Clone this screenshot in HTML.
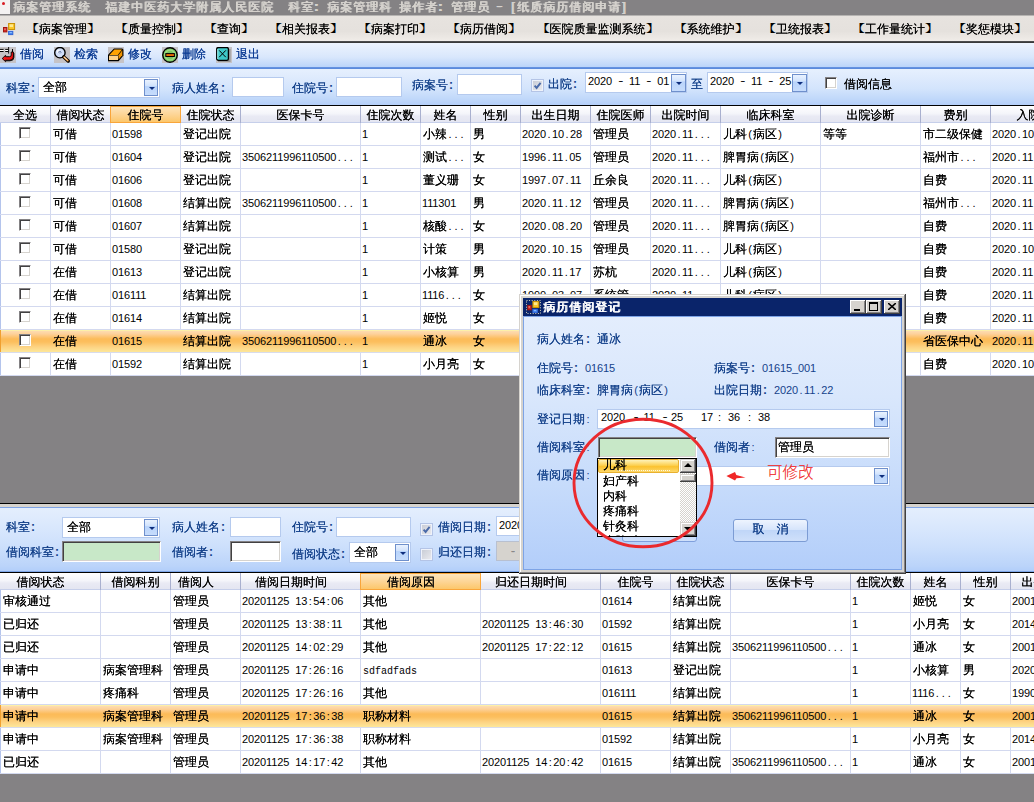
<!DOCTYPE html><html lang="zh"><head><meta charset="utf-8"><title>病案管理系统</title><style>
*{box-sizing:border-box;margin:0;padding:0}
html,body{width:1034px;height:802px;overflow:hidden}
body{position:relative;background:#848284;font:12px/12px "Liberation Sans","WenQuanYi Zen Hei","Noto Sans CJK SC",sans-serif;color:#000;text-shadow:0 0 0}
.n{font-size:11px;text-shadow:none;letter-spacing:-.12px}
.p{display:inline-block;width:6px;text-align:center;font-size:11px;text-shadow:none}
.h{transform:translateY(-1px) scaleX(1.4)}
.co{font-size:12px;font-weight:bold}
.m{font:10px/12px 'Liberation Mono',monospace;text-shadow:none}
.dp .p{width:5.7px}
.a{position:absolute;white-space:nowrap}
.t{position:absolute;white-space:nowrap;height:12px;line-height:12px}
.bl{color:#15428b}
#title{left:0;top:0;width:1034px;height:15px;background:#848284}
#title .t{color:#d6d3ce;letter-spacing:1px;top:1px;text-shadow:1px 0 0,0 0 0}
#menu{left:0;top:15px;width:1034px;height:28px;background:linear-gradient(#b6b4b2 0,#b6b4b2 1px,#e7e3df 1px,#e5e1dd 60%,#eeeae6 90%,#f4f0ec);border-bottom:1px solid #3a3a3a}
#menu:after{content:"";position:absolute;left:0;right:0;bottom:0;height:1px;background:#4c4c4c}
#menu .t{top:7px}
.bk{display:inline-block;width:12px;font-family:'Noto Serif CJK SC',serif;text-shadow:none}
.bl_{transform:scale(1.25,.86);transform-origin:11px 55%}
.br_{transform:scale(1.25,.86);transform-origin:1px 55%}
#tool{left:0;top:43px;width:1034px;height:26px;background:linear-gradient(#eef4fe 0,#e4eefd 6px,#d9e7fc 14px,#c4dafa 21px,#bad4fa 24px,#6a96e2 24px,#5686da 26px)}
#tool .t{top:5px;color:#0c3c94}
.ib{position:absolute;top:4px;width:16px;height:16px;background:#c6c3c6}
#filt{left:0;top:69px;width:1034px;height:37px;background:linear-gradient(#e6f0fe 0,#dfebfd 8px,#d3e4fc 20px,#c0d8fa 30px,#b4cffa 36px);border-bottom:1px solid #000}
.inp{position:absolute;background:#fff;border:1px solid #b5caee}
.sunk{position:absolute;background:#fff;border:1px solid;border-color:#848284 #fff #fff #848284;box-shadow:inset 1px 1px 0 #424142, inset -1px -1px 0 #d6d3ce}
.ddb{position:absolute;width:14px;background:linear-gradient(#e9f2ff,#d2e3fc 38%,#b9d4fb 42%,#c6dcfc);border:1px solid #6f90cc}
.ddb:after{content:"";position:absolute;left:3.5px;top:50%;margin-top:-1px;border:3px solid transparent;border-top:3px solid #0e2e7e;border-bottom:none;width:0;height:0}
.hd{position:absolute;height:17px;box-shadow:inset 0 -1px 0 #c6cfea;background:linear-gradient(#fefeff,#f4f5fa 45%,#e9eaf4 60%,#e3e5f1);overflow:hidden}
.hc{position:absolute;top:0;height:17px;border-right:1px solid #a9b0cf;text-align:center;line-height:12px;padding-top:3px;overflow:hidden;white-space:nowrap}
.hc.sel{background:linear-gradient(#fde6c0,#fdd596 50%,#fcc565);box-shadow:inset 0 0 0 1px #f9a53a;border-right:none}
.row{position:absolute;left:0;width:1034px;height:23px;background:#fff;border-bottom:1px solid #d3d9ef;overflow:hidden}
.row.sel{background:linear-gradient(#fdf0a8 0,#fdf0a8 1px,#fddcb0 1px,#fdd19a 4px,#fcbb58 9px,#fcbf5e 12px,#fdd383 17px,#fde79a 22px);border-bottom-color:#d8dcec}
.c{position:absolute;top:0;height:23px;border-right:1px solid #d3d9ef;padding:5px 0 0 2px;line-height:12px;overflow:hidden;white-space:nowrap}
.row.sel .c{border-right-color:transparent}
.c>.n:first-child{margin-left:-1px}
.cb{position:absolute;width:12px;height:12px;background:#fff;border:1px solid;border-color:#848284 #fff #fff #848284;box-shadow:inset 1px 1px 0 #424142, inset -1px -1px 0 #d6d3ce}
</style></head><body>
<div class="a" id="title">
<div class="a" style="left:0;top:0;width:10px;height:14px;background:#f4f2f2"></div><div class="a" style="left:2px;top:2px;width:3px;height:3px;background:#d81c24;border-radius:2px"></div>
<div class="t" style="left:13px">病案管理系统</div>
<div class="t" style="left:105px">福建中医药大学附属人民医院</div>
<div class="t" style="left:288px">科室<b>:</b></div>
<div class="t" style="left:327px">病案管理科</div>
<div class="t" style="left:399px">操作者<b>:</b></div>
<div class="t" style="left:451px">管理员</div>
<div class="t" style="left:497px"><span class="h" style="display:inline-block">-</span></div>
<div class="t" style="left:511px">[</div>
<div class="t" style="left:517px">纸质病历借阅申请</div>
<div class="t" style="left:622px">]</div>
</div>
<div class="a" id="menu">
<svg class="a" style="left:2px;top:7px" width="14" height="14" viewBox="0 0 14 14"><rect x="1.5" y="5.5" width="3.4" height="4.4" fill="#d82820" stroke="#a01410" stroke-width="1"/><rect x="2.4" y="6.4" width="1.2" height="1.6" fill="#f09088"/><rect x="6.6" y="1.5" width="6" height="6" fill="#fbc62a" stroke="#c89208" stroke-width="1"/><rect x="7.6" y="2.4" width="3.4" height="2.6" fill="#fdea90"/><rect x="6.6" y="9.4" width="4.2" height="3.2" fill="#4a8af0" stroke="#3468d8" stroke-width="1"/><rect x="7.6" y="10" width="2.2" height="1" fill="#90c0ff"/></svg>
<div class="t" style="left:27px"><span class="bk bl_">【</span>病案管理<span class="bk br_">】</span></div>
<div class="t" style="left:116px"><span class="bk bl_">【</span>质量控制<span class="bk br_">】</span></div>
<div class="t" style="left:205px"><span class="bk bl_">【</span>查询<span class="bk br_">】</span></div>
<div class="t" style="left:270px"><span class="bk bl_">【</span>相关报表<span class="bk br_">】</span></div>
<div class="t" style="left:359px"><span class="bk bl_">【</span>病案打印<span class="bk br_">】</span></div>
<div class="t" style="left:448px"><span class="bk bl_">【</span>病历借阅<span class="bk br_">】</span></div>
<div class="t" style="left:537.5px"><span class="bk bl_">【</span>医院质量监测系统<span class="bk br_">】</span></div>
<div class="t" style="left:674.5px"><span class="bk bl_">【</span>系统维护<span class="bk br_">】</span></div>
<div class="t" style="left:764px"><span class="bk bl_">【</span>卫统报表<span class="bk br_">】</span></div>
<div class="t" style="left:853px"><span class="bk bl_">【</span>工作量统计<span class="bk br_">】</span></div>
<div class="t" style="left:954px"><span class="bk bl_">【</span>奖惩模块<span class="bk br_">】</span></div>
</div>
<div class="a" id="tool">
<div class="ib" style="left:0px"><svg width="16" height="16" viewBox="0 0 16 16"><rect x="0" y="1.9" width="8.4" height="3.1" fill="#000"/><rect x="0" y="2.9" width="8.2" height="1.1" fill="#fff"/><rect x="3.6" y="1.9" width="1.6" height="3.1" fill="#c6c3c6"/><rect x="8.2" y="0" width=".9" height="6.6" fill="#000"/><rect x="12" y="2" width="1" height="3" fill="#000"/><path d="M11.2 5 L13.4 5 L13.4 10 Q13.4 13.2 10 13.2 L5.6 13.2 L5.6 14.7 L2.2 11.5 L5.6 8.3 L5.6 9.7 L9.6 9.7 Q11.2 9.7 11.2 8 Z" fill="#f01414" stroke="#000" stroke-width=".9" stroke-linejoin="round"/><path d="M13.9 6 L13.9 10.4 Q13.8 13.8 10 13.8 L6 13.8" stroke="#000" stroke-width=".9" fill="none"/></svg></div>
<div class="t" style="left:20px">借阅</div>
<div class="ib" style="left:54px"><svg width="16" height="16" viewBox="0 0 16 16"><circle cx="5.9" cy="5.7" r="5.2" fill="#d2dff8" stroke="#000" stroke-width="1.4"/><circle cx="4.6" cy="4.4" r="1.8" fill="#fff" opacity=".8"/><path d="M4 5.5 L6 4 L7.5 5.5 M6 4.5 V6.5" stroke="#7888b0" fill="none"/><path d="M9.8 9.9 L14.2 14" stroke="#000" stroke-width="3.4" stroke-linecap="round"/><path d="M10 10.2 L13.8 13.7" stroke="#f8a040" stroke-width="1.6" stroke-linecap="round"/><path d="M10 9.8 L13.4 13" stroke="#fff" stroke-width=".8"/></svg></div>
<div class="t" style="left:74px">检索</div>
<div class="ib" style="left:108px"><svg width="16" height="16" viewBox="0 0 16 16"><path d="M6 1.5 L14.3 1.5 L15.4 2.8 L15.4 8.6 L10.6 14.2 L0 14.2 L0 7.8Z" fill="#000"/><path d="M6.4 2.6 L14 2.6 L9.8 7.9 L1.4 7.9Z" fill="#ffa200"/><path d="M14.3 3.2 L14.3 8.2 L10.6 12.6 L10.4 8.3Z" fill="#ee9200"/><rect x="1" y="8.6" width="9" height="4.4" fill="#ffd288"/></svg></div>
<div class="t" style="left:128px">修改</div>
<div class="ib" style="left:162px"><svg width="16" height="16" viewBox="0 0 16 16"><circle cx="8" cy="8" r="7.25" fill="#7cc864" stroke="#000" stroke-width="1.4"/><circle cx="8" cy="8" r="5" fill="none" stroke="#9cdc84" stroke-width="1.6"/><rect x="3.8" y="6.6" width="8.6" height="2.9" fill="#e86a04" stroke="#000" stroke-width="1"/></svg></div>
<div class="t" style="left:182px">删除</div>
<div class="ib" style="left:216px"><svg width="16" height="16" viewBox="0 0 16 16"><rect x="2" y="2" width="12.6" height="13" fill="#9a9a9a"/><rect x="0.7" y="0.5" width="11.7" height="12.8" rx="1.6" fill="#3ec8c8" stroke="#000" stroke-width="1.3"/><path d="M1.8 2 V12" stroke="#a8f0f0" stroke-width="1"/><path d="M3.2 3.4 L9.8 10.2 M9.8 3.4 L3.2 10.2" stroke="#000" stroke-width="1"/></svg></div>
<div class="t" style="left:236px">退出</div>
</div>
<div class="a" id="filt">
<div class="t bl" style="left:6px;top:13px">科室<span class="p co">:</span></div>
<div class="inp" style="left:38px;top:8px;width:122px;height:21px"><div class="t" style="left:4px;top:3px;color:#000">全部</div><div class="ddb" style="right:1px;top:1px;height:17px"></div></div>
<div class="t bl" style="left:172px;top:13px">病人姓名<span class="p co">:</span></div>
<div class="inp" style="left:232px;top:8px;width:52px;height:20px"></div>
<div class="t bl" style="left:292px;top:13px">住院号<span class="p co">:</span></div>
<div class="inp" style="left:336px;top:8px;width:66px;height:20px"></div>
<div class="t bl" style="left:412px;top:10px">病案号<span class="p co">:</span></div>
<div class="inp" style="left:457px;top:5px;width:65px;height:21px"></div>
<div class="a" style="left:531px;top:10px;width:13px;height:13px;background:linear-gradient(135deg,#c6cad4,#ececf0);border:1px solid #b4c4e6;box-shadow:inset 0 0 0 1px #eef2fa"><svg class="a" style="left:1px;top:1px" width="9" height="9" viewBox="0 0 9 9"><path d="M1.6 4.6 L3.6 6.9 L7.6 1.8" stroke="#4a6aa8" stroke-width="1.9" fill="none"/></svg></div>
<div class="t bl" style="left:548px;top:9px">出院<span class="p co">:</span></div>
<div class="inp" style="left:585px;top:3px;width:102px;height:21px"><div class="t dp" style="left:2px;top:2px"><span class="n">2020</span><span class="p">&nbsp;</span><span class="p h">-</span><span class="p">&nbsp;</span><span class="n">11</span><span class="p">&nbsp;</span><span class="p h">-</span><span class="p">&nbsp;</span><span class="n">01</span></div><div class="ddb" style="right:0px;top:1px;width:15px;height:18px"></div></div>
<div class="t bl" style="left:691px;top:9px">至</div>
<div class="inp" style="left:707px;top:3px;width:101px;height:21px"><div class="t dp" style="left:2px;top:2px"><span class="n">2020</span><span class="p">&nbsp;</span><span class="p h">-</span><span class="p">&nbsp;</span><span class="n">11</span><span class="p">&nbsp;</span><span class="p h">-</span><span class="p">&nbsp;</span><span class="n">25</span></div><div class="ddb" style="right:0px;top:1px;width:15px;height:18px"></div></div>
<div class="cb" style="left:825px;top:8px"></div>
<div class="t " style="left:844px;top:9px">借阅信息</div>
</div>
<div class="hd" style="left:0;top:106px;width:1034px">
<div class="hc" style="left:0px;width:51px">全选</div>
<div class="hc" style="left:51px;width:60px">借阅状态</div>
<div class="hc sel" style="left:110px;width:71px">住院号</div>
<div class="hc" style="left:181px;width:60px">住院状态</div>
<div class="hc" style="left:241px;width:120px">医保卡号</div>
<div class="hc" style="left:361px;width:60px">住院次数</div>
<div class="hc" style="left:421px;width:50px">姓名</div>
<div class="hc" style="left:471px;width:50px">性别</div>
<div class="hc" style="left:521px;width:70px">出生日期</div>
<div class="hc" style="left:591px;width:60px">住院医师</div>
<div class="hc" style="left:651px;width:70px">出院时间</div>
<div class="hc" style="left:721px;width:100px">临床科室</div>
<div class="hc" style="left:821px;width:100px">出院诊断</div>
<div class="hc" style="left:921px;width:70px">费别</div>
<div class="hc" style="left:991px;width:100px">入院日期</div>
</div>
<div class="row" style="top:123px">
<div class="c" style="left:0;width:51px;border-left:1px solid #b4c4ec"><div class="cb" style="left:18px;top:4px"></div></div>
<div class="c" style="left:51px;width:60px">可借</div>
<div class="c" style="left:111px;width:70px"><span class="n">01598</span></div>
<div class="c" style="left:181px;width:60px">登记出院</div>
<div class="c" style="left:241px;width:120px"></div>
<div class="c" style="left:361px;width:60px"><span class="n">1</span></div>
<div class="c" style="left:421px;width:50px">小辣<span class="p">.</span><span class="p">.</span><span class="p">.</span></div>
<div class="c" style="left:471px;width:50px">男</div>
<div class="c" style="left:521px;width:70px"><span class="n">2020</span><span class="p">.</span><span class="n">10</span><span class="p">.</span><span class="n">28</span></div>
<div class="c" style="left:591px;width:60px">管理员</div>
<div class="c" style="left:651px;width:70px"><span class="n">2020</span><span class="p">.</span><span class="n">11</span><span class="p">.</span><span class="p">.</span><span class="p">.</span></div>
<div class="c" style="left:721px;width:100px">儿科<span class="p">(</span>病区<span class="p">)</span></div>
<div class="c" style="left:821px;width:100px">等等</div>
<div class="c" style="left:921px;width:70px">市二级保健</div>
<div class="c" style="left:991px;width:100px"><span class="n">2020</span><span class="p">.</span><span class="n">10</span><span class="p">.</span><span class="n">30</span></div>
</div>
<div class="row" style="top:146px">
<div class="c" style="left:0;width:51px;border-left:1px solid #b4c4ec"><div class="cb" style="left:18px;top:4px"></div></div>
<div class="c" style="left:51px;width:60px">可借</div>
<div class="c" style="left:111px;width:70px"><span class="n">01604</span></div>
<div class="c" style="left:181px;width:60px">登记出院</div>
<div class="c" style="left:241px;width:120px"><span class="n">3506211996110500</span><span class="p">.</span><span class="p">.</span><span class="p">.</span></div>
<div class="c" style="left:361px;width:60px"><span class="n">1</span></div>
<div class="c" style="left:421px;width:50px">测试<span class="p">.</span><span class="p">.</span><span class="p">.</span></div>
<div class="c" style="left:471px;width:50px">女</div>
<div class="c" style="left:521px;width:70px"><span class="n">1996</span><span class="p">.</span><span class="n">11</span><span class="p">.</span><span class="n">05</span></div>
<div class="c" style="left:591px;width:60px">管理员</div>
<div class="c" style="left:651px;width:70px"><span class="n">2020</span><span class="p">.</span><span class="n">11</span><span class="p">.</span><span class="p">.</span><span class="p">.</span></div>
<div class="c" style="left:721px;width:100px">脾胃病<span class="p">(</span>病区<span class="p">)</span></div>
<div class="c" style="left:821px;width:100px"></div>
<div class="c" style="left:921px;width:70px">福州市<span class="p">.</span><span class="p">.</span><span class="p">.</span></div>
<div class="c" style="left:991px;width:100px"><span class="n">2020</span><span class="p">.</span><span class="n">11</span><span class="p">.</span><span class="n">02</span></div>
</div>
<div class="row" style="top:169px">
<div class="c" style="left:0;width:51px;border-left:1px solid #b4c4ec"><div class="cb" style="left:18px;top:4px"></div></div>
<div class="c" style="left:51px;width:60px">可借</div>
<div class="c" style="left:111px;width:70px"><span class="n">01606</span></div>
<div class="c" style="left:181px;width:60px">登记出院</div>
<div class="c" style="left:241px;width:120px"></div>
<div class="c" style="left:361px;width:60px"><span class="n">1</span></div>
<div class="c" style="left:421px;width:50px">董义珊</div>
<div class="c" style="left:471px;width:50px">女</div>
<div class="c" style="left:521px;width:70px"><span class="n">1997</span><span class="p">.</span><span class="n">07</span><span class="p">.</span><span class="n">11</span></div>
<div class="c" style="left:591px;width:60px">丘余良</div>
<div class="c" style="left:651px;width:70px"><span class="n">2020</span><span class="p">.</span><span class="n">11</span><span class="p">.</span><span class="p">.</span><span class="p">.</span></div>
<div class="c" style="left:721px;width:100px">儿科<span class="p">(</span>病区<span class="p">)</span></div>
<div class="c" style="left:821px;width:100px"></div>
<div class="c" style="left:921px;width:70px">自费</div>
<div class="c" style="left:991px;width:100px"><span class="n">2020</span><span class="p">.</span><span class="n">11</span><span class="p">.</span><span class="n">03</span></div>
</div>
<div class="row" style="top:192px">
<div class="c" style="left:0;width:51px;border-left:1px solid #b4c4ec"><div class="cb" style="left:18px;top:4px"></div></div>
<div class="c" style="left:51px;width:60px">可借</div>
<div class="c" style="left:111px;width:70px"><span class="n">01608</span></div>
<div class="c" style="left:181px;width:60px">结算出院</div>
<div class="c" style="left:241px;width:120px"><span class="n">3506211996110500</span><span class="p">.</span><span class="p">.</span><span class="p">.</span></div>
<div class="c" style="left:361px;width:60px"><span class="n">1</span></div>
<div class="c" style="left:421px;width:50px"><span class="n">111301</span></div>
<div class="c" style="left:471px;width:50px">男</div>
<div class="c" style="left:521px;width:70px"><span class="n">2020</span><span class="p">.</span><span class="n">11</span><span class="p">.</span><span class="n">12</span></div>
<div class="c" style="left:591px;width:60px">管理员</div>
<div class="c" style="left:651px;width:70px"><span class="n">2020</span><span class="p">.</span><span class="n">11</span><span class="p">.</span><span class="p">.</span><span class="p">.</span></div>
<div class="c" style="left:721px;width:100px">脾胃病<span class="p">(</span>病区<span class="p">)</span></div>
<div class="c" style="left:821px;width:100px"></div>
<div class="c" style="left:921px;width:70px">福州市<span class="p">.</span><span class="p">.</span><span class="p">.</span></div>
<div class="c" style="left:991px;width:100px"><span class="n">2020</span><span class="p">.</span><span class="n">11</span><span class="p">.</span><span class="n">12</span></div>
</div>
<div class="row" style="top:215px">
<div class="c" style="left:0;width:51px;border-left:1px solid #b4c4ec"><div class="cb" style="left:18px;top:4px"></div></div>
<div class="c" style="left:51px;width:60px">可借</div>
<div class="c" style="left:111px;width:70px"><span class="n">01607</span></div>
<div class="c" style="left:181px;width:60px">结算出院</div>
<div class="c" style="left:241px;width:120px"></div>
<div class="c" style="left:361px;width:60px"><span class="n">1</span></div>
<div class="c" style="left:421px;width:50px">核酸<span class="p">.</span><span class="p">.</span><span class="p">.</span></div>
<div class="c" style="left:471px;width:50px">女</div>
<div class="c" style="left:521px;width:70px"><span class="n">2020</span><span class="p">.</span><span class="n">08</span><span class="p">.</span><span class="n">20</span></div>
<div class="c" style="left:591px;width:60px">管理员</div>
<div class="c" style="left:651px;width:70px"><span class="n">2020</span><span class="p">.</span><span class="n">11</span><span class="p">.</span><span class="p">.</span><span class="p">.</span></div>
<div class="c" style="left:721px;width:100px">脾胃病<span class="p">(</span>病区<span class="p">)</span></div>
<div class="c" style="left:821px;width:100px"></div>
<div class="c" style="left:921px;width:70px">自费</div>
<div class="c" style="left:991px;width:100px"><span class="n">2020</span><span class="p">.</span><span class="n">11</span><span class="p">.</span><span class="n">04</span></div>
</div>
<div class="row" style="top:238px">
<div class="c" style="left:0;width:51px;border-left:1px solid #b4c4ec"><div class="cb" style="left:18px;top:4px"></div></div>
<div class="c" style="left:51px;width:60px">可借</div>
<div class="c" style="left:111px;width:70px"><span class="n">01580</span></div>
<div class="c" style="left:181px;width:60px">登记出院</div>
<div class="c" style="left:241px;width:120px"></div>
<div class="c" style="left:361px;width:60px"><span class="n">1</span></div>
<div class="c" style="left:421px;width:50px">计策</div>
<div class="c" style="left:471px;width:50px">男</div>
<div class="c" style="left:521px;width:70px"><span class="n">2020</span><span class="p">.</span><span class="n">10</span><span class="p">.</span><span class="n">15</span></div>
<div class="c" style="left:591px;width:60px">管理员</div>
<div class="c" style="left:651px;width:70px"><span class="n">2020</span><span class="p">.</span><span class="n">11</span><span class="p">.</span><span class="p">.</span><span class="p">.</span></div>
<div class="c" style="left:721px;width:100px">儿科<span class="p">(</span>病区<span class="p">)</span></div>
<div class="c" style="left:821px;width:100px"></div>
<div class="c" style="left:921px;width:70px">自费</div>
<div class="c" style="left:991px;width:100px"><span class="n">2020</span><span class="p">.</span><span class="n">10</span><span class="p">.</span><span class="n">28</span></div>
</div>
<div class="row" style="top:261px">
<div class="c" style="left:0;width:51px;border-left:1px solid #b4c4ec"><div class="cb" style="left:18px;top:4px"></div></div>
<div class="c" style="left:51px;width:60px">在借</div>
<div class="c" style="left:111px;width:70px"><span class="n">01613</span></div>
<div class="c" style="left:181px;width:60px">登记出院</div>
<div class="c" style="left:241px;width:120px"></div>
<div class="c" style="left:361px;width:60px"><span class="n">1</span></div>
<div class="c" style="left:421px;width:50px">小核算</div>
<div class="c" style="left:471px;width:50px">男</div>
<div class="c" style="left:521px;width:70px"><span class="n">2020</span><span class="p">.</span><span class="n">11</span><span class="p">.</span><span class="n">17</span></div>
<div class="c" style="left:591px;width:60px">苏杭</div>
<div class="c" style="left:651px;width:70px"><span class="n">2020</span><span class="p">.</span><span class="n">11</span><span class="p">.</span><span class="p">.</span><span class="p">.</span></div>
<div class="c" style="left:721px;width:100px">儿科<span class="p">(</span>病区<span class="p">)</span></div>
<div class="c" style="left:821px;width:100px"></div>
<div class="c" style="left:921px;width:70px">自费</div>
<div class="c" style="left:991px;width:100px"><span class="n">2020</span><span class="p">.</span><span class="n">11</span><span class="p">.</span><span class="n">17</span></div>
</div>
<div class="row" style="top:284px">
<div class="c" style="left:0;width:51px;border-left:1px solid #b4c4ec"><div class="cb" style="left:18px;top:4px"></div></div>
<div class="c" style="left:51px;width:60px">在借</div>
<div class="c" style="left:111px;width:70px"><span class="n">016111</span></div>
<div class="c" style="left:181px;width:60px">结算出院</div>
<div class="c" style="left:241px;width:120px"></div>
<div class="c" style="left:361px;width:60px"><span class="n">1</span></div>
<div class="c" style="left:421px;width:50px"><span class="n">1116</span><span class="p">.</span><span class="p">.</span><span class="p">.</span></div>
<div class="c" style="left:471px;width:50px">女</div>
<div class="c" style="left:521px;width:70px"><span class="n">1990</span><span class="p">.</span><span class="n">03</span><span class="p">.</span><span class="n">07</span></div>
<div class="c" style="left:591px;width:60px">系统管<span class="p">.</span><span class="p">.</span><span class="p">.</span></div>
<div class="c" style="left:651px;width:70px"><span class="n">2020</span><span class="p">.</span><span class="n">11</span><span class="p">.</span><span class="p">.</span><span class="p">.</span></div>
<div class="c" style="left:721px;width:100px">儿科<span class="p">(</span>病区<span class="p">)</span></div>
<div class="c" style="left:821px;width:100px"></div>
<div class="c" style="left:921px;width:70px">自费</div>
<div class="c" style="left:991px;width:100px"><span class="n">2020</span><span class="p">.</span><span class="n">11</span><span class="p">.</span><span class="n">16</span></div>
</div>
<div class="row" style="top:307px">
<div class="c" style="left:0;width:51px;border-left:1px solid #b4c4ec"><div class="cb" style="left:18px;top:4px"></div></div>
<div class="c" style="left:51px;width:60px">在借</div>
<div class="c" style="left:111px;width:70px"><span class="n">01614</span></div>
<div class="c" style="left:181px;width:60px">结算出院</div>
<div class="c" style="left:241px;width:120px"></div>
<div class="c" style="left:361px;width:60px"><span class="n">1</span></div>
<div class="c" style="left:421px;width:50px">姬悦</div>
<div class="c" style="left:471px;width:50px">女</div>
<div class="c" style="left:521px;width:70px"><span class="n">2001</span><span class="p">.</span><span class="n">01</span><span class="p">.</span><span class="n">01</span></div>
<div class="c" style="left:591px;width:60px">管理员</div>
<div class="c" style="left:651px;width:70px"><span class="n">2020</span><span class="p">.</span><span class="n">11</span><span class="p">.</span><span class="p">.</span><span class="p">.</span></div>
<div class="c" style="left:721px;width:100px">儿科<span class="p">(</span>病区<span class="p">)</span></div>
<div class="c" style="left:821px;width:100px"></div>
<div class="c" style="left:921px;width:70px">自费</div>
<div class="c" style="left:991px;width:100px"><span class="n">2020</span><span class="p">.</span><span class="n">11</span><span class="p">.</span><span class="n">18</span></div>
</div>
<div class="row sel" style="top:330px">
<div class="c" style="left:0;width:51px;border-left:1px solid #f0a030"><div class="cb" style="left:18px;top:4px"></div></div>
<div class="c" style="left:51px;width:60px">在借</div>
<div class="c" style="left:111px;width:70px"><span class="n">01615</span></div>
<div class="c" style="left:181px;width:60px">结算出院</div>
<div class="c" style="left:241px;width:120px"><span class="n">3506211996110500</span><span class="p">.</span><span class="p">.</span><span class="p">.</span></div>
<div class="c" style="left:361px;width:60px"><span class="n">1</span></div>
<div class="c" style="left:421px;width:50px">通冰</div>
<div class="c" style="left:471px;width:50px">女</div>
<div class="c" style="left:521px;width:70px"><span class="n">2001</span><span class="p">.</span><span class="n">01</span><span class="p">.</span><span class="n">01</span></div>
<div class="c" style="left:591px;width:60px">管理员</div>
<div class="c" style="left:651px;width:70px"><span class="n">2020</span><span class="p">.</span><span class="n">11</span><span class="p">.</span><span class="p">.</span><span class="p">.</span></div>
<div class="c" style="left:721px;width:100px">脾胃病<span class="p">(</span>病区<span class="p">)</span></div>
<div class="c" style="left:821px;width:100px"></div>
<div class="c" style="left:921px;width:70px">省医保中心</div>
<div class="c" style="left:991px;width:100px"><span class="n">2020</span><span class="p">.</span><span class="n">11</span><span class="p">.</span><span class="n">20</span></div>
</div>
<div class="row" style="top:353px">
<div class="c" style="left:0;width:51px;border-left:1px solid #b4c4ec"><div class="cb" style="left:18px;top:4px"></div></div>
<div class="c" style="left:51px;width:60px">在借</div>
<div class="c" style="left:111px;width:70px"><span class="n">01592</span></div>
<div class="c" style="left:181px;width:60px">结算出院</div>
<div class="c" style="left:241px;width:120px"></div>
<div class="c" style="left:361px;width:60px"><span class="n">1</span></div>
<div class="c" style="left:421px;width:50px">小月亮</div>
<div class="c" style="left:471px;width:50px">女</div>
<div class="c" style="left:521px;width:70px"><span class="n">2014</span><span class="p">.</span><span class="n">05</span><span class="p">.</span><span class="n">06</span></div>
<div class="c" style="left:591px;width:60px">管理员</div>
<div class="c" style="left:651px;width:70px"><span class="n">2020</span><span class="p">.</span><span class="n">11</span><span class="p">.</span><span class="p">.</span><span class="p">.</span></div>
<div class="c" style="left:721px;width:100px">儿科<span class="p">(</span>病区<span class="p">)</span></div>
<div class="c" style="left:821px;width:100px"></div>
<div class="c" style="left:921px;width:70px">自费</div>
<div class="c" style="left:991px;width:100px"><span class="n">2020</span><span class="p">.</span><span class="n">10</span><span class="p">.</span><span class="n">29</span></div>
</div>
<div class="a" style="left:0;top:503px;width:1034px;height:1px;background:#000"></div>
<div class="a" style="left:0;top:504px;width:1034px;height:4px;background:linear-gradient(#d6d3ce 0,#d6d3ce 3px,#7ea4e6 3px)"></div>
<div class="a" id="bp" style="left:0;top:508px;width:1034px;height:65px;background:linear-gradient(#e4eefd 0,#dae8fd 18px,#cde0fc 38px,#bbd4fa 58px,#b2cefa 63px,#7ea6e8 63px);border-bottom:1px solid #000">
<div class="t bl" style="left:6px;top:13px">科室<span class="p co">:</span></div>
<div class="inp" style="left:62px;top:9px;width:98px;height:21px"><div class="t" style="left:4px;top:3px;color:#000">全部</div><div class="ddb" style="right:1px;top:1px;height:17px"></div></div>
<div class="t bl" style="left:172px;top:13px">病人姓名<span class="p co">:</span></div>
<div class="inp" style="left:230px;top:9px;width:51px;height:20px"></div>
<div class="t bl" style="left:292px;top:13px">住院号<span class="p co">:</span></div>
<div class="inp" style="left:336px;top:9px;width:75px;height:20px"></div>
<div class="a" style="left:420px;top:15px;width:13px;height:13px;background:linear-gradient(135deg,#c6cad4,#ececf0);border:1px solid #b4c4e6;box-shadow:inset 0 0 0 1px #eef2fa"><svg class="a" style="left:1px;top:1px" width="9" height="9" viewBox="0 0 9 9"><path d="M1.6 4.6 L3.6 6.9 L7.6 1.8" stroke="#4a6aa8" stroke-width="1.9" fill="none"/></svg></div>
<div class="t bl" style="left:438px;top:13px">借阅日期<span class="p co">:</span></div>
<div class="inp" style="left:496px;top:8px;width:102px;height:20px"><div class="t dp" style="left:2px;top:2px"><span class="n">2020</span><span class="p">&nbsp;</span><span class="p h">-</span><span class="p">&nbsp;</span><span class="n">11</span><span class="p">&nbsp;</span><span class="p h">-</span><span class="p">&nbsp;</span><span class="n">25</span></div><div class="ddb" style="right:0px;top:1px;width:15px;height:17px"></div></div>
<div class="t bl" style="left:6px;top:38px">借阅科室<span class="p co">:</span></div>
<div class="sunk" style="left:62px;top:33px;width:99px;height:21px;background:#c8e8c8"></div>
<div class="t bl" style="left:172px;top:38px">借阅者<span class="p co">:</span></div>
<div class="sunk" style="left:230px;top:33px;width:51px;height:21px"></div>
<div class="t bl" style="left:292px;top:40px">借阅状态<span class="p co">:</span></div>
<div class="inp" style="left:349px;top:34px;width:62px;height:21px"><div class="t" style="left:4px;top:3px;color:#000">全部</div><div class="ddb" style="right:1px;top:1px;height:17px"></div></div>
<div class="a" style="left:420px;top:40px;width:13px;height:13px;background:linear-gradient(135deg,#c6cad4,#ececf0);border:1px solid #b4c4e6;box-shadow:inset 0 0 0 1px #eef2fa"></div>
<div class="t bl" style="left:438px;top:38px">归还日期<span class="p co">:</span></div>
<div class="a" style="left:496px;top:33px;width:102px;height:20px;background:#d6d3ce;border:1px solid #b8c0d0"><div class="t" style="left:14px;top:3px;color:#888">-</div></div>
</div>
<div class="hd" style="left:0;top:573px;width:1034px">
<div class="hc" style="left:0px;width:101px;padding-right:19px">借阅状态</div>
<div class="hc" style="left:101px;width:70px">借阅科别</div>
<div class="hc" style="left:171px;width:70px;padding-right:19px">借阅人</div>
<div class="hc" style="left:241px;width:120px;padding-right:19px">借阅日期时间</div>
<div class="hc sel" style="left:360px;width:121px;padding-right:19px">借阅原因</div>
<div class="hc" style="left:481px;width:120px;padding-right:19px">归还日期时间</div>
<div class="hc" style="left:601px;width:70px">住院号</div>
<div class="hc" style="left:671px;width:60px">住院状态</div>
<div class="hc" style="left:731px;width:120px">医保卡号</div>
<div class="hc" style="left:851px;width:60px">住院次数</div>
<div class="hc" style="left:911px;width:50px">姓名</div>
<div class="hc" style="left:961px;width:50px">性别</div>
<div class="hc" style="left:1011px;width:70px">出生日期</div>
</div>
<div class="row" style="top:590px">
<div class="c" style="left:0px;width:101px;border-left:1px solid #b4c4ec;padding-left:2px">审核通过</div>
<div class="c" style="left:101px;width:70px"></div>
<div class="c" style="left:171px;width:70px">管理员</div>
<div class="c" style="left:241px;width:120px"><span class="n">20201125</span><span class="p">&nbsp;</span><span class="n">13</span><span class="p">:</span><span class="n">54</span><span class="p">:</span><span class="n">06</span></div>
<div class="c" style="left:361px;width:120px">其他</div>
<div class="c" style="left:481px;width:120px"></div>
<div class="c" style="left:601px;width:70px"><span class="n">01614</span></div>
<div class="c" style="left:671px;width:60px">结算出院</div>
<div class="c" style="left:731px;width:120px"></div>
<div class="c" style="left:851px;width:60px"><span class="n">1</span></div>
<div class="c" style="left:911px;width:50px">姬悦</div>
<div class="c" style="left:961px;width:50px">女</div>
<div class="c" style="left:1011px;width:70px"><span class="n">2001</span><span class="p">.</span><span class="n">01</span><span class="p">.</span><span class="n">01</span></div>
</div>
<div class="row" style="top:613px">
<div class="c" style="left:0px;width:101px;border-left:1px solid #b4c4ec;padding-left:2px">已归还</div>
<div class="c" style="left:101px;width:70px"></div>
<div class="c" style="left:171px;width:70px">管理员</div>
<div class="c" style="left:241px;width:120px"><span class="n">20201125</span><span class="p">&nbsp;</span><span class="n">13</span><span class="p">:</span><span class="n">38</span><span class="p">:</span><span class="n">11</span></div>
<div class="c" style="left:361px;width:120px">其他</div>
<div class="c" style="left:481px;width:120px"><span class="n">20201125</span><span class="p">&nbsp;</span><span class="n">13</span><span class="p">:</span><span class="n">46</span><span class="p">:</span><span class="n">30</span></div>
<div class="c" style="left:601px;width:70px"><span class="n">01592</span></div>
<div class="c" style="left:671px;width:60px">结算出院</div>
<div class="c" style="left:731px;width:120px"></div>
<div class="c" style="left:851px;width:60px"><span class="n">1</span></div>
<div class="c" style="left:911px;width:50px">小月亮</div>
<div class="c" style="left:961px;width:50px">女</div>
<div class="c" style="left:1011px;width:70px"><span class="n">2014</span><span class="p">.</span><span class="n">05</span><span class="p">.</span><span class="n">06</span></div>
</div>
<div class="row" style="top:636px">
<div class="c" style="left:0px;width:101px;border-left:1px solid #b4c4ec;padding-left:2px">已归还</div>
<div class="c" style="left:101px;width:70px"></div>
<div class="c" style="left:171px;width:70px">管理员</div>
<div class="c" style="left:241px;width:120px"><span class="n">20201125</span><span class="p">&nbsp;</span><span class="n">14</span><span class="p">:</span><span class="n">02</span><span class="p">:</span><span class="n">29</span></div>
<div class="c" style="left:361px;width:120px">其他</div>
<div class="c" style="left:481px;width:120px"><span class="n">20201125</span><span class="p">&nbsp;</span><span class="n">17</span><span class="p">:</span><span class="n">22</span><span class="p">:</span><span class="n">12</span></div>
<div class="c" style="left:601px;width:70px"><span class="n">01615</span></div>
<div class="c" style="left:671px;width:60px">结算出院</div>
<div class="c" style="left:731px;width:120px"><span class="n">3506211996110500</span><span class="p">.</span><span class="p">.</span><span class="p">.</span></div>
<div class="c" style="left:851px;width:60px"><span class="n">1</span></div>
<div class="c" style="left:911px;width:50px">通冰</div>
<div class="c" style="left:961px;width:50px">女</div>
<div class="c" style="left:1011px;width:70px"><span class="n">2001</span><span class="p">.</span><span class="n">01</span><span class="p">.</span><span class="n">01</span></div>
</div>
<div class="row" style="top:659px">
<div class="c" style="left:0px;width:101px;border-left:1px solid #b4c4ec;padding-left:2px">申请中</div>
<div class="c" style="left:101px;width:70px">病案管理科</div>
<div class="c" style="left:171px;width:70px">管理员</div>
<div class="c" style="left:241px;width:120px"><span class="n">20201125</span><span class="p">&nbsp;</span><span class="n">17</span><span class="p">:</span><span class="n">26</span><span class="p">:</span><span class="n">16</span></div>
<div class="c" style="left:361px;width:120px"><span class="m">sdfadfads</span></div>
<div class="c" style="left:481px;width:120px"></div>
<div class="c" style="left:601px;width:70px"><span class="n">01613</span></div>
<div class="c" style="left:671px;width:60px">登记出院</div>
<div class="c" style="left:731px;width:120px"></div>
<div class="c" style="left:851px;width:60px"><span class="n">1</span></div>
<div class="c" style="left:911px;width:50px">小核算</div>
<div class="c" style="left:961px;width:50px">男</div>
<div class="c" style="left:1011px;width:70px"><span class="n">2020</span><span class="p">.</span><span class="n">11</span><span class="p">.</span><span class="n">17</span></div>
</div>
<div class="row" style="top:682px">
<div class="c" style="left:0px;width:101px;border-left:1px solid #b4c4ec;padding-left:2px">申请中</div>
<div class="c" style="left:101px;width:70px">疼痛科</div>
<div class="c" style="left:171px;width:70px">管理员</div>
<div class="c" style="left:241px;width:120px"><span class="n">20201125</span><span class="p">&nbsp;</span><span class="n">17</span><span class="p">:</span><span class="n">26</span><span class="p">:</span><span class="n">16</span></div>
<div class="c" style="left:361px;width:120px">其他</div>
<div class="c" style="left:481px;width:120px"></div>
<div class="c" style="left:601px;width:70px"><span class="n">016111</span></div>
<div class="c" style="left:671px;width:60px">结算出院</div>
<div class="c" style="left:731px;width:120px"></div>
<div class="c" style="left:851px;width:60px"><span class="n">1</span></div>
<div class="c" style="left:911px;width:50px"><span class="n">1116</span><span class="p">.</span><span class="p">.</span><span class="p">.</span></div>
<div class="c" style="left:961px;width:50px">女</div>
<div class="c" style="left:1011px;width:70px"><span class="n">1990</span><span class="p">.</span><span class="n">03</span><span class="p">.</span><span class="n">07</span></div>
</div>
<div class="row sel" style="top:705px">
<div class="c" style="left:0px;width:101px;border-left:1px solid #f0a030;padding-left:2px">申请中</div>
<div class="c" style="left:101px;width:70px">病案管理科</div>
<div class="c" style="left:171px;width:70px">管理员</div>
<div class="c" style="left:241px;width:120px"><span class="n">20201125</span><span class="p">&nbsp;</span><span class="n">17</span><span class="p">:</span><span class="n">36</span><span class="p">:</span><span class="n">38</span></div>
<div class="c" style="left:361px;width:120px">职称材料</div>
<div class="c" style="left:481px;width:120px"></div>
<div class="c" style="left:601px;width:70px"><span class="n">01615</span></div>
<div class="c" style="left:671px;width:60px">结算出院</div>
<div class="c" style="left:731px;width:120px"><span class="n">3506211996110500</span><span class="p">.</span><span class="p">.</span><span class="p">.</span></div>
<div class="c" style="left:851px;width:60px"><span class="n">1</span></div>
<div class="c" style="left:911px;width:50px">通冰</div>
<div class="c" style="left:961px;width:50px">女</div>
<div class="c" style="left:1011px;width:70px"><span class="n">2001</span><span class="p">.</span><span class="n">01</span><span class="p">.</span><span class="n">01</span></div>
</div>
<div class="row" style="top:728px">
<div class="c" style="left:0px;width:101px;border-left:1px solid #b4c4ec;padding-left:2px">申请中</div>
<div class="c" style="left:101px;width:70px">病案管理科</div>
<div class="c" style="left:171px;width:70px">管理员</div>
<div class="c" style="left:241px;width:120px"><span class="n">20201125</span><span class="p">&nbsp;</span><span class="n">17</span><span class="p">:</span><span class="n">36</span><span class="p">:</span><span class="n">38</span></div>
<div class="c" style="left:361px;width:120px">职称材料</div>
<div class="c" style="left:481px;width:120px"></div>
<div class="c" style="left:601px;width:70px"><span class="n">01592</span></div>
<div class="c" style="left:671px;width:60px">结算出院</div>
<div class="c" style="left:731px;width:120px"></div>
<div class="c" style="left:851px;width:60px"><span class="n">1</span></div>
<div class="c" style="left:911px;width:50px">小月亮</div>
<div class="c" style="left:961px;width:50px">女</div>
<div class="c" style="left:1011px;width:70px"><span class="n">2014</span><span class="p">.</span><span class="n">05</span><span class="p">.</span><span class="n">06</span></div>
</div>
<div class="row" style="top:751px">
<div class="c" style="left:0px;width:101px;border-left:1px solid #b4c4ec;padding-left:2px">已归还</div>
<div class="c" style="left:101px;width:70px"></div>
<div class="c" style="left:171px;width:70px">管理员</div>
<div class="c" style="left:241px;width:120px"><span class="n">20201125</span><span class="p">&nbsp;</span><span class="n">14</span><span class="p">:</span><span class="n">17</span><span class="p">:</span><span class="n">42</span></div>
<div class="c" style="left:361px;width:120px">其他</div>
<div class="c" style="left:481px;width:120px"><span class="n">20201125</span><span class="p">&nbsp;</span><span class="n">14</span><span class="p">:</span><span class="n">20</span><span class="p">:</span><span class="n">42</span></div>
<div class="c" style="left:601px;width:70px"><span class="n">01615</span></div>
<div class="c" style="left:671px;width:60px">结算出院</div>
<div class="c" style="left:731px;width:120px"><span class="n">3506211996110500</span><span class="p">.</span><span class="p">.</span><span class="p">.</span></div>
<div class="c" style="left:851px;width:60px"><span class="n">1</span></div>
<div class="c" style="left:911px;width:50px">通冰</div>
<div class="c" style="left:961px;width:50px">女</div>
<div class="c" style="left:1011px;width:70px"><span class="n">2001</span><span class="p">.</span><span class="n">01</span><span class="p">.</span><span class="n">01</span></div>
</div>
<div class="a" id="dlg" style="left:519px;top:294px;width:387px;height:280px;background:#d6d3ce;box-shadow:inset -1px -1px 0 #404040, inset 1px 1px 0 #d6d3ce, inset -2px -2px 0 #848284, inset 2px 2px 0 #fff">
<div class="a" style="left:4px;top:4px;width:379px;height:18px;background:#0a246a"></div>
<svg class="a" style="left:7px;top:6px" width="15" height="14" viewBox="0 0 15 14"><rect x="0.5" y="0.5" width="14" height="13" fill="none" stroke="#d8d4b8" stroke-dasharray="1 1.6" stroke-width="1"/><rect x="1.8" y="5.4" width="3.4" height="4.4" fill="#d82820" stroke="#a01410" stroke-width="1"/><rect x="2.6" y="6.2" width="1.2" height="1.6" fill="#f09088"/><rect x="6.9" y="1.5" width="6" height="6" fill="#fbc62a" stroke="#c89208" stroke-width="1"/><rect x="7.9" y="2.4" width="3.4" height="2.6" fill="#fdea90"/><rect x="6.9" y="9.3" width="4.4" height="3.2" fill="#4a8af0" stroke="#3468d8" stroke-width="1"/><rect x="7.9" y="9.9" width="2.2" height="1" fill="#90c0ff"/></svg>
<div class="t" style="left:24px;top:7px;color:#fff;letter-spacing:1px;text-shadow:1px 0 0,0 0 0">病历借阅登记</div>
<div class="a" style="left:331px;top:6px;width:16px;height:14px;background:#d6d3ce;box-shadow:inset -1px -1px 0 #404040, inset 1px 1px 0 #fff, inset -2px -2px 0 #848284"><div class="a" style="left:4px;top:9px;width:6px;height:2px;background:#000"></div></div>
<div class="a" style="left:347px;top:6px;width:16px;height:14px;background:#d6d3ce;box-shadow:inset -1px -1px 0 #404040, inset 1px 1px 0 #fff, inset -2px -2px 0 #848284"><div class="a" style="left:3px;top:2px;width:9px;height:9px;border:1px solid #000;border-top-width:2px"></div></div>
<div class="a" style="left:365px;top:6px;width:16px;height:14px;background:#d6d3ce;box-shadow:inset -1px -1px 0 #404040, inset 1px 1px 0 #fff, inset -2px -2px 0 #848284"><svg class="a" style="left:4px;top:3px" width="8" height="7" viewBox="0 0 8 7"><path d="M0 0 L8 7 M8 0 L0 7" stroke="#000" stroke-width="1.6"/></svg></div>
<div class="a" style="left:4px;top:22px;width:379px;height:254px;border:1px solid #7ea4e6;background:linear-gradient(#e3edfd 0,#d9e7fc 80px,#c6dbfb 170px,#b3cefa 252px)">
<div class="t bl" style="left:13px;top:16px">病人姓名<span class="p co">:</span><span class="p">&nbsp;</span>通冰</div>
<div class="t bl" style="left:13px;top:45px">住院号<span class="p co">:</span><span class="p">&nbsp;</span><span class="n">01615</span></div>
<div class="t bl" style="left:190px;top:45px">病案号<span class="p co">:</span><span class="p">&nbsp;</span><span class="n">01615</span><span class="p">_</span><span class="n">001</span></div>
<div class="t bl" style="left:13px;top:67px">临床科室<span class="p co">:</span><span class="p">&nbsp;</span>脾胃病<span class="p">(</span>病区<span class="p">)</span></div>
<div class="t bl" style="left:190px;top:67px">出院日期<span class="p co">:</span><span class="p">&nbsp;</span><span class="n">2020</span><span class="p">.</span><span class="n">11</span><span class="p">.</span><span class="n">22</span></div>
<div class="t bl" style="left:13px;top:96px">登记日期<span class="p">:</span></div>
<div class="inp" style="left:73px;top:92px;width:293px;height:20px"><div class="t" style="left:0;top:1px;width:200px"><span class="n" style="position:absolute;left:3px;top:0;line-height:12px">2020</span><span class="p h" style="position:absolute;left:34.6px;top:0">-</span><span class="n" style="position:absolute;left:45.5px;top:0;line-height:12px">11</span><span class="p h" style="position:absolute;left:64.3px;top:0">-</span><span class="n" style="position:absolute;left:73px;top:0;line-height:12px">25</span><span class="n" style="position:absolute;left:103px;top:0;line-height:12px">17</span><span class="p" style="position:absolute;left:118.6px;top:0">:</span><span class="n" style="position:absolute;left:130px;top:0;line-height:12px">36</span><span class="p" style="position:absolute;left:148.5px;top:0">:</span><span class="n" style="position:absolute;left:160px;top:0;line-height:12px">38</span></div><div class="ddb" style="right:1px;top:1px;height:16px"></div></div>
<div class="t bl" style="left:13px;top:124px">借阅科室<span class="p">:</span></div>
<div class="sunk" style="left:74px;top:120px;width:99px;height:21px;background:#c8e8c8"></div>
<div class="t bl" style="left:190px;top:124px">借阅者<span class="p">:</span></div>
<div class="sunk" style="left:251px;top:120px;width:115px;height:21px"><div class="t" style="left:2px;top:3px">管理员</div></div>
<div class="t bl" style="left:13px;top:152px">借阅原因<span class="p">:</span></div>
<div class="inp" style="left:73px;top:149px;width:293px;height:20px"><div class="ddb" style="right:1px;top:1px;height:16px"></div></div>
<div class="a" style="left:98px;top:202px;width:75px;height:23px;border:1px solid #7f9fdc;border-radius:3px;background:linear-gradient(#eef4fe,#d4e3fb 50%,#c0d6f8 50%,#cfe0fa)"></div>
<div class="a" style="left:209px;top:202px;width:75px;height:23px;border:1px solid #7f9fdc;border-radius:3px;background:linear-gradient(#eef4fe,#d4e3fb 50%,#c0d6f8 50%,#cfe0fa);color:#15428b;text-align:center;line-height:19px;border-color:#7c9cd4">取<span style="margin-left:12px">消</span></div>
<svg class="a" style="left:202px;top:154px" width="24" height="12" viewBox="0 0 24 12"><path d="M0.4 5.1 L9 1 L10.3 4 L19.5 6.6 L10.5 7.2 L9 9.6Z" fill="#f02828"/></svg>
<div class="a" style="left:243px;top:148px;font-size:15.5px;line-height:16px;color:#f03030;font-family:'Liberation Sans','Noto Sans CJK SC',sans-serif;font-weight:300;text-shadow:0 0 0 rgba(240,40,40,.55)">可修改</div>
<div class="a" style="left:73px;top:141px;width:100px;height:79px;background:#fff;border:1px solid #000;overflow:hidden">
<div class="a" style="left:0;top:0;width:81px;height:14px;background:linear-gradient(#fef2b8,#fcd050 45%,#fbc230 55%,#fdd868);border:1px solid #e8b030;border-radius:2px"><div class="a" style="left:18px;right:8px;bottom:1px;border-bottom:1px dotted #fff8e0"></div></div>
<div class="t" style="left:5px;top:0px">儿科</div>
<div class="t" style="left:5px;top:16px">妇产科</div>
<div class="t" style="left:5px;top:31px">内科</div>
<div class="t" style="left:5px;top:46px">疼痛科</div>
<div class="t" style="left:5px;top:61px">针灸科</div>
<div class="t" style="left:5px;top:76px">皮肤科</div>
<div class="a" style="left:82px;top:1px;width:16px;height:76px;background:#e8e6e2;background-image:repeating-conic-gradient(#d6d3ce 0 25%,#fff 0 50%);background-size:2px 2px"></div>
<div class="a" style="left:82px;top:0px;width:16px;height:14px;background:#d6d3ce;box-shadow:inset -1px -1px 0 #404040, inset 1px 1px 0 #d6d3ce, inset -2px -2px 0 #848284, inset 2px 2px 0 #fff"><div class="a" style="left:4px;top:4px;border:4px solid transparent;border-bottom:4px solid #000;border-top:none"></div></div>
<div class="a" style="left:82px;top:15px;width:16px;height:8px;background:#d6d3ce;box-shadow:inset -1px -1px 0 #404040, inset 1px 1px 0 #d6d3ce, inset -2px -2px 0 #848284, inset 2px 2px 0 #fff"></div>
<div class="a" style="left:82px;top:63px;width:16px;height:14px;background:#d6d3ce;box-shadow:inset -1px -1px 0 #404040, inset 1px 1px 0 #d6d3ce, inset -2px -2px 0 #848284, inset 2px 2px 0 #fff"><div class="a" style="left:4px;top:5px;border:4px solid transparent;border-top:4px solid #000;border-bottom:none"></div></div>
</div>
<svg class="a" style="left:46px;top:98px" width="146" height="136" viewBox="0 0 146 136"><ellipse cx="73" cy="68" rx="69" ry="63.8" fill="none" stroke="#ea2a2e" stroke-width="2.9"/></svg>
</div>
</div>
</body></html>
